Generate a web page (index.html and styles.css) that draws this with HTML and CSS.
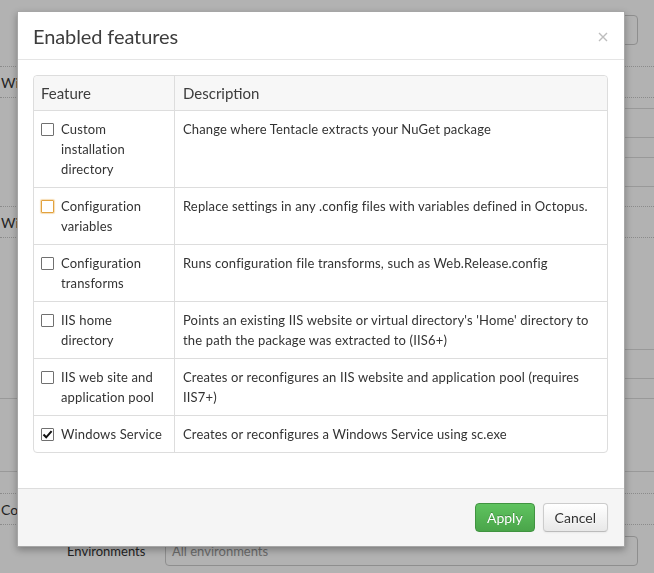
FILE: index.html
```html
<!DOCTYPE html>
<html>
<head>
<meta charset="utf-8">
<title>Enabled features</title>
<link rel="stylesheet" href="styles.css">
</head>
<body>
<div class="page">
  <div class="top-field"><div class="field"></div></div>
  <div class="dotted-row gap-21"><span class="row-text">Windows Service</span></div>
  <div class="right-line gap-10"></div>
  <div class="right-line gap-19"></div>
  <div class="dotted-row gap-19"><span class="row-text">Windows Service</span></div>
  <div class="right-line gap-111"></div>
  <div class="section-block"></div>
  <div class="dotted-row gap-21"><span class="row-text">Configuration</span></div>
  <div class="env-row">
    <span class="env-label">Environments</span>
    <div class="field env-field">All environments</div>
  </div>
</div>
<div class="backdrop"></div>

<div class="modal">
  <div class="modal-header">
    <h3 class="modal-title">Enabled features</h3>
    <span class="close-btn">
      <svg width="10" height="10" viewBox="0 0 10 10"><path d="M1 1 L9 9 M9 1 L1 9" stroke="#bdbdbd" stroke-width="1.4" fill="none"/></svg>
    </span>
  </div>
  <div class="modal-body">
    <table class="features">
      <thead>
        <tr><th class="col-feature">Feature</th><th>Description</th></tr>
      </thead>
      <tbody>
        <tr>
          <td class="col-feature"><div class="feat"><span class="cb"></span><span class="feat-name">Custom installation directory</span></div></td>
          <td>Change where Tentacle extracts your NuGet package</td>
        </tr>
        <tr>
          <td class="col-feature"><div class="feat"><span class="cb cb-focus"></span><span class="feat-name">Configuration variables</span></div></td>
          <td>Replace settings in any .config files with variables defined in Octopus.</td>
        </tr>
        <tr>
          <td class="col-feature"><div class="feat"><span class="cb"></span><span class="feat-name">Configuration transforms</span></div></td>
          <td>Runs configuration file transforms, such as Web.Release.config</td>
        </tr>
        <tr>
          <td class="col-feature"><div class="feat"><span class="cb"></span><span class="feat-name">IIS home directory</span></div></td>
          <td>Points an existing IIS website or virtual directory's 'Home' directory to the path the package was extracted to (IIS6+)</td>
        </tr>
        <tr>
          <td class="col-feature"><div class="feat"><span class="cb"></span><span class="feat-name">IIS web site and application pool</span></div></td>
          <td>Creates or reconfigures an IIS website and application pool (requires IIS7+)</td>
        </tr>
        <tr>
          <td class="col-feature"><div class="feat"><span class="cb cb-checked"><svg width="11" height="11" viewBox="0 0 11 11"><path d="M1.5 5.5 L4.2 8.3 L9.6 2.2" stroke="#111" stroke-width="2" fill="none"/></svg></span><span class="feat-name">Windows Service</span></div></td>
          <td>Creates or reconfigures a Windows Service using sc.exe</td>
        </tr>
      </tbody>
    </table>
  </div>
  <div class="modal-footer">
    <button class="btn btn-success">Apply</button>
    <button class="btn btn-default">Cancel</button>
  </div>
</div>
</body>
</html>
```

FILE: styles.css
```css
html, body {
  margin: 0;
  padding: 0;
  background: #ffffff;
  font-family: Lato, "Liberation Sans", sans-serif;
  color: #333333;
}

.page {
  width: 654px;
  height: 573px;
  overflow: hidden;
  font-size: 13px;
}

.top-field {
  padding-top: 15px;
  padding-left: 165px;
  padding-right: 16px;
}

.field {
  box-sizing: border-box;
  height: 30px;
  border: 1px solid #cccccc;
  border-radius: 4px;
  background: #ffffff;
}

.dotted-row {
  box-sizing: border-box;
  height: 32px;
  border-top: 1px dotted #c8c8c8;
  border-bottom: 1px dotted #c8c8c8;
  display: flex;
  align-items: center;
  font-size: 14px;
  padding-left: 1px;
  color: #333;
}

.row-text {
  white-space: nowrap;
}

.gap-10 { margin-top: 10px; }
.gap-19 { margin-top: 19px; }
.gap-21 { margin-top: 21px; }
.gap-111 { margin-top: 111px; }

.right-line {
  box-sizing: border-box;
  height: 30px;
  margin-left: 300px;
  border-top: 1px solid #dcdcdc;
  border-bottom: 1px solid #dcdcdc;
}

.section-block {
  box-sizing: border-box;
  margin-top: 19px;
  height: 74px;
  border-top: 1px solid #dcdcdc;
  border-bottom: 1px solid #dcdcdc;
}

.env-row {
  margin-top: 11px;
  display: flex;
  align-items: center;
  padding-left: 67px;
  padding-right: 16px;
}

.env-label {
  width: 98px;
  font-size: 13px;
  color: #333;
}

.env-field {
  flex: 1;
  display: flex;
  align-items: center;
  padding-left: 6px;
  font-size: 13px;
  color: #999999;
}

.backdrop {
  position: fixed;
  inset: 0;
  background: rgba(0, 0, 0, 0.3);
}

.modal {
  position: absolute;
  left: 17px;
  top: 11px;
  width: 608px;
  box-sizing: border-box;
  background: #ffffff;
  border: 1px solid rgba(0, 0, 0, 0.35);
  box-shadow: 0 3px 7px rgba(0, 0, 0, 0.3);
  font-family: Lato, "Liberation Sans", sans-serif;
  color: #333333;
}

.modal-header {
  height: 47px;
  border-bottom: 1px solid #e5e5e5;
  display: flex;
  align-items: center;
  justify-content: space-between;
  padding: 0 16px 0 15px;
}

.modal-title {
  margin: 0;
  font-size: 20px;
  font-weight: normal;
  color: #3d3d3d;
  letter-spacing: -0.1px;
}

.close-btn {
  display: flex;
  margin-top: 2px;
}

.modal-body {
  padding: 15px 16px 35px 15px;
}

.features {
  width: 100%;
  border-collapse: separate;
  border-spacing: 0;
  border: 1px solid #dddddd;
  border-radius: 4px;
  font-size: 13px;
  line-height: 20px;
  letter-spacing: 0.15px;
}

.features th {
  text-align: left;
  font-weight: normal;
  font-size: 15px;
  line-height: 18px;
  padding: 8px 8px 8px 7px;
  background: #f7f7f7;
  color: #3d3d3d;
  letter-spacing: 0;
}

.features th:first-child { border-top-left-radius: 4px; }
.features th:last-child { border-top-right-radius: 4px; }

.features td {
  vertical-align: top;
  padding: 8px 8px 8px 8px;
  border-top: 1px solid #dddddd;
}

.features th + th,
.features td + td {
  border-left: 1px solid #dddddd;
  padding-left: 8px;
}

.features .col-feature {
  width: 125px;
  padding-left: 7px;
}

.feat {
  display: flex;
  align-items: flex-start;
}

.cb {
  flex: none;
  box-sizing: border-box;
  width: 13px;
  height: 13px;
  margin-top: 4px;
  margin-right: 7px;
  border: 1px solid #707070;
  border-radius: 1px;
  background: #ffffff;
  display: flex;
  align-items: center;
  justify-content: center;
}

.cb-focus {
  border-color: #e2a23e;
  box-shadow: 0 0 1px 1px rgba(236, 178, 90, 0.45);
}

.feat-name {
  flex: 1;
  padding-right: 2px;
}

.modal-footer {
  background: #f5f5f5;
  border-top: 1px solid #dddddd;
  padding: 14px 16px 14px 15px;
  display: flex;
  justify-content: flex-end;
  gap: 8px;
}

.btn {
  box-sizing: border-box;
  height: 29px;
  padding: 0 11px;
  font-family: Lato, "Liberation Sans", sans-serif;
  font-size: 14px;
  border-radius: 4px;
  cursor: pointer;
}

.btn-success {
  color: #ffffff;
  background: linear-gradient(#5fc35f, #4aa54a);
  border: 1px solid #419441;
  text-shadow: 0 -1px 0 rgba(0, 0, 0, 0.25);
}

.btn-default {
  color: #333333;
  background: linear-gradient(#ffffff, #e8e8e8);
  border: 1px solid #cccccc;
  border-bottom-color: #bbbbbb;
  text-shadow: 0 1px 1px rgba(255, 255, 255, 0.75);
  box-shadow: 0 1px 2px rgba(0, 0, 0, 0.05);
}
```
